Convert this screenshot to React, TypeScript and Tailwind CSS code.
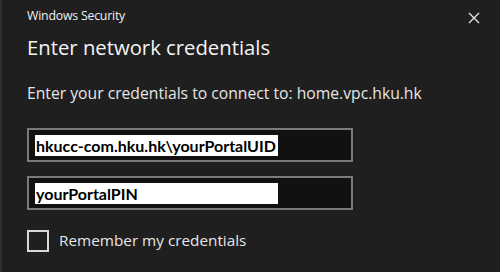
export default function App() {
  return (
    <div
      className="w-[500px] h-[272px] bg-[#1f1f1f] border-l-2 border-[#2e2e2e] text-white overflow-hidden"
      style={{ fontFamily: '"Open Sans", "Noto Sans", sans-serif' }}
    >
      <div className="flex items-start justify-between pl-[25px] pr-[20px] pt-[7px]">
        <span className="text-[12.3px] text-[#f0f0f0] tracking-[-0.2px]">Windows Security</span>
        <svg className="w-[12px] h-[12px] mt-[5px]" viewBox="0 0 12 12" stroke="#e8e8e8" strokeWidth="1.3">
          <path d="M1 1 L11 11 M11 1 L1 11" />
        </svg>
      </div>
      <h1 className="pl-[25px] mt-[9px] text-[20.3px] leading-[26px] text-[#f4f4f4]">Enter network credentials</h1>
      <p className="pl-[25px] mt-[23px] text-[15.7px] leading-[20px] text-[#e6e6e6]">
        Enter your credentials to connect to: home.vpc.hku.hk
      </p>
      <div className="pl-[25px] mt-[25px] flex flex-col gap-[14px]">
        <div className="w-[326px] h-[34px] border-2 border-[#7a7a7a] bg-[#111111] flex items-center pl-[6px]">
          <span
            className="bg-white text-black font-bold text-[16px] h-[21px] leading-[21px] w-[243px] pl-[1px] whitespace-nowrap overflow-hidden"
            style={{ fontFamily: 'Lato, "Open Sans", sans-serif' }}
          >
            hkucc-com.hku.hk\yourPortalUID
          </span>
        </div>
        <div className="w-[326px] h-[34px] border-2 border-[#7a7a7a] bg-[#111111] flex items-center pl-[6px]">
          <span
            className="bg-white text-black font-bold text-[16px] h-[21px] leading-[21px] w-[243px] pl-[1px] whitespace-nowrap overflow-hidden"
            style={{ fontFamily: 'Lato, "Open Sans", sans-serif' }}
          >
            yourPortalPIN
          </span>
        </div>
      </div>
      <div className="pl-[25px] mt-[19px] flex items-center gap-[10px]">
        <div className="w-[22px] h-[22px] border-2 border-[#d8d8d8]" />
        <span className="text-[15.3px] text-[#e6e6e6]">Remember my credentials</span>
      </div>
    </div>
  );
}
